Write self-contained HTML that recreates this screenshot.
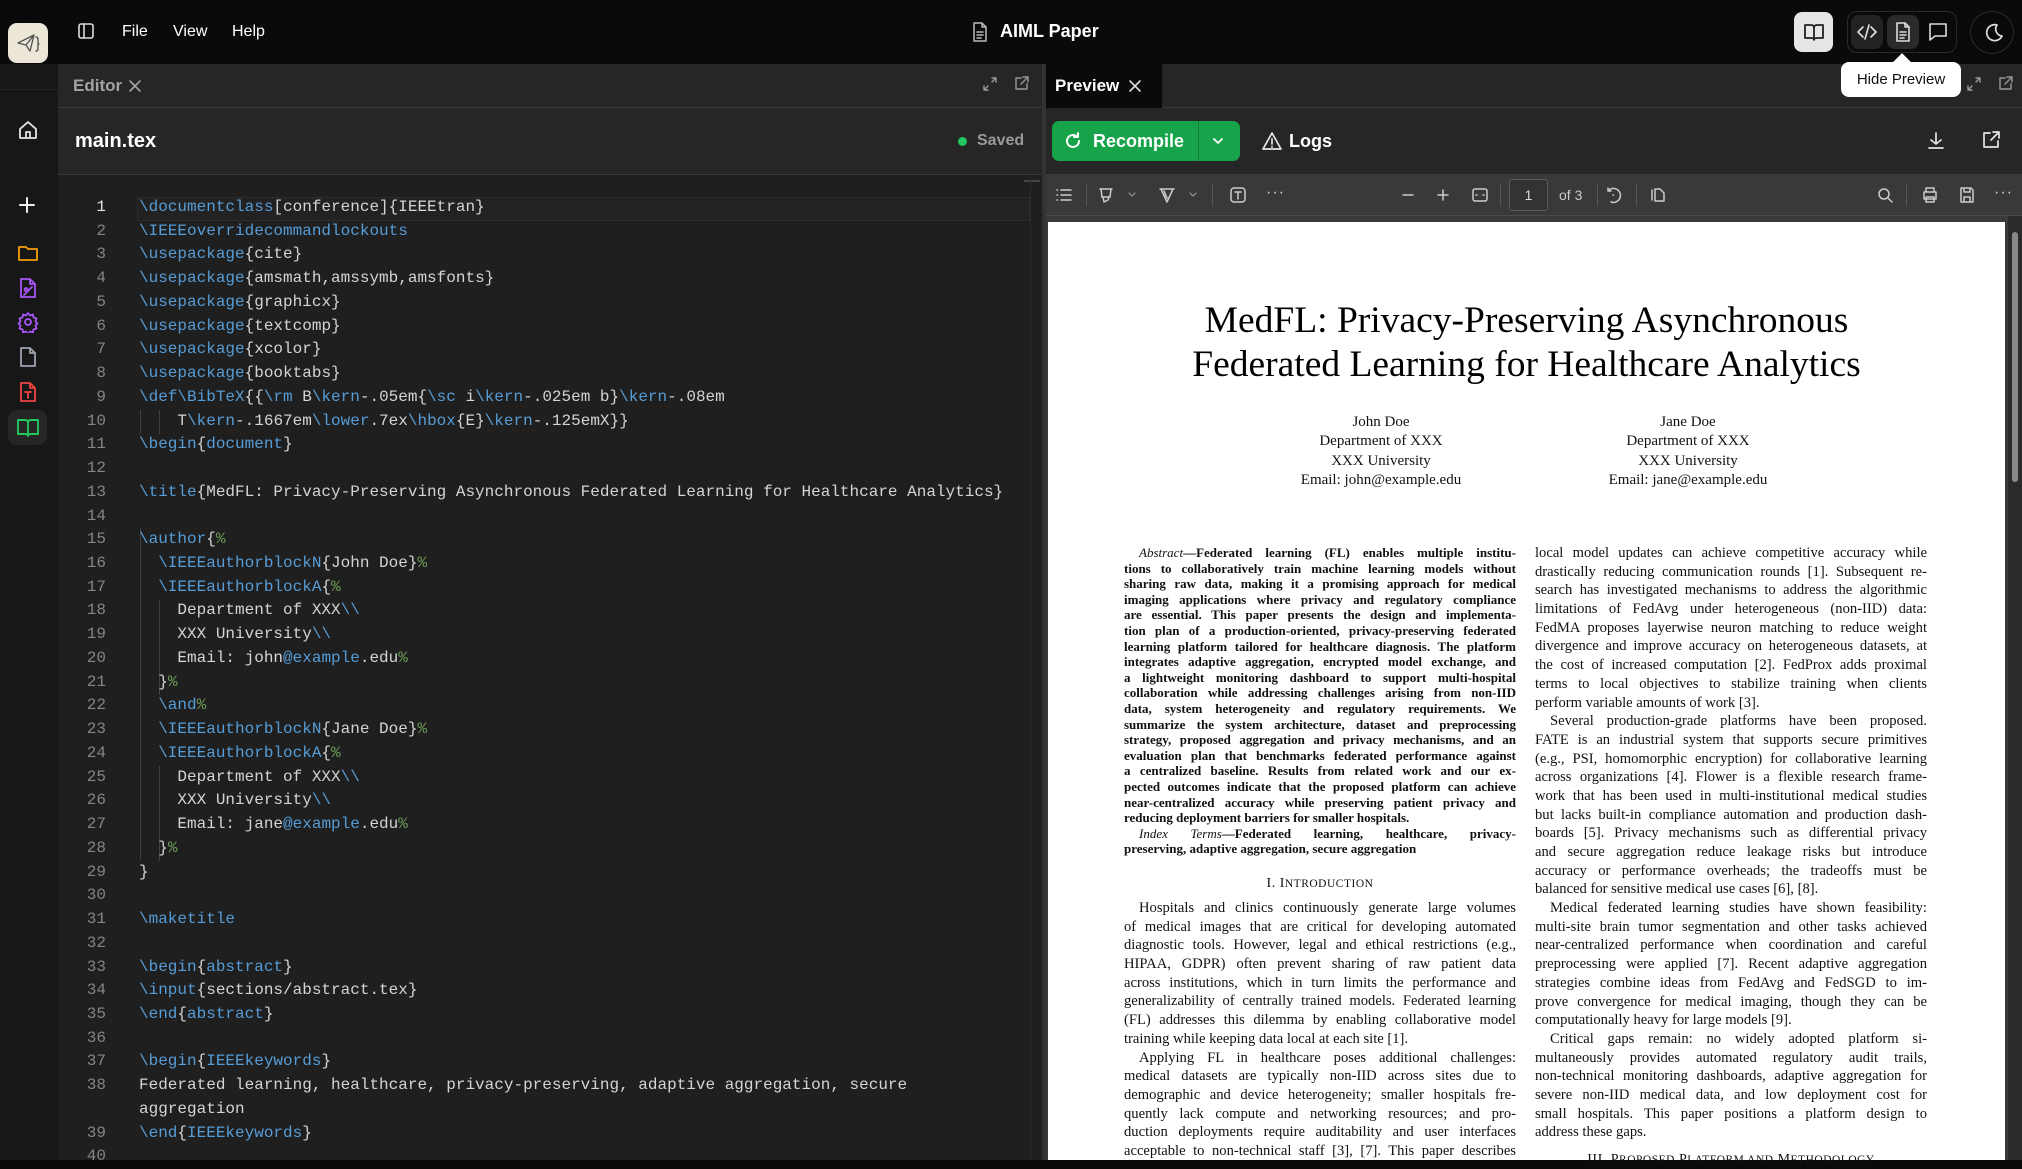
<!DOCTYPE html>
<html><head><meta charset="utf-8">
<style>
*{box-sizing:border-box;margin:0;padding:0}
body{width:2022px;height:1160px;overflow:hidden;background:#0a0a0a;font-family:"Liberation Sans",sans-serif;position:relative}
.a{position:absolute}
svg{position:absolute;fill:none;stroke-linecap:round;stroke-linejoin:round}
.code{position:absolute;left:139px;top:196px;font-family:"Liberation Mono",monospace;font-size:16px;line-height:23.74px;color:#d4d4d4;white-space:pre}
.nums{position:absolute;left:58px;width:48px;top:196px;font-family:"Liberation Mono",monospace;font-size:16px;line-height:23.74px;color:#858585;text-align:right;white-space:pre}
.k{color:#569cd6}.c{color:#6a9955}
.pdf{font-family:"Liberation Serif",serif;color:#111}
.col{position:absolute;width:392px}
.col div{height:18.7px;line-height:18.7px;font-size:14.6px;text-align:justify;text-align-last:justify;overflow:hidden;white-space:nowrap}
.col div.e{text-align-last:left}
.col div.i{padding-left:15px}
.ab div{height:15.6px;line-height:15.6px;font-size:13px;font-weight:bold}
.tb{position:absolute;top:195px;color:#cfcfcf}
</style></head><body>

<!-- top bar -->
<div class="a" style="left:0;top:0;width:2022px;height:64px;background:#0a0a0a"></div>
<div class="a" style="left:8px;top:23px;width:40px;height:40px;background:#ece7d8;border-radius:9px"></div>
<svg style="left:14px;top:29px" width="28" height="28" viewBox="0 0 28 28" stroke="#555" stroke-width="1.4"><path d="M4 14 L20 6 L16 22 L12 16 Z M12 16 L20 6"/><path d="M22 8 q2 0 2 3 v3 q0 1 1 1 q-1 0 -1 1 v3 q0 3 -2 3"/></svg>
<svg style="left:77px;top:22px" width="18" height="18" viewBox="0 0 18 18" stroke="#ddd" stroke-width="1.6"><rect x="2" y="2" width="14" height="14" rx="2"/><path d="M7 2v14"/></svg>
<div class="a" style="left:122px;top:23px;color:#fff;font-size:16px">File</div>
<div class="a" style="left:173px;top:23px;color:#fff;font-size:16px">View</div>
<div class="a" style="left:232px;top:23px;color:#fff;font-size:16px">Help</div>
<svg style="left:971px;top:21px" width="18" height="22" viewBox="0 0 18 22" stroke="#bbb" stroke-width="1.5"><path d="M3 2h8l4 4v14H3z M11 2v4h4 M6 11h6 M6 14h6 M6 17h4"/></svg>
<div class="a" style="left:1000px;top:21px;color:#fff;font-size:18px;font-weight:bold">AIML Paper</div>
<div class="a" style="left:1794px;top:12px;width:39px;height:40px;background:#e6e6e6;border-radius:8px"></div>
<svg style="left:1803px;top:22px" width="22" height="20" viewBox="0 0 22 20" stroke="#222" stroke-width="1.8"><path d="M2 3h6q3 0 3 3v12q0-2-3-2H2z M20 3h-6q-3 0-3 3v12q0-2 3-2h6z"/></svg>
<div class="a" style="left:1847px;top:11px;width:110px;height:42px;border:1px solid #2a2a2a;border-radius:10px"></div>
<div class="a" style="left:1851px;top:15px;width:32px;height:34px;background:#222;border-radius:8px"></div>
<div class="a" style="left:1887px;top:15px;width:32px;height:34px;background:#2a2a2a;border-radius:8px"></div>
<svg style="left:1855px;top:22px" width="24" height="20" viewBox="0 0 24 20" stroke="#ddd" stroke-width="1.6"><path d="M8 5l-5 5 5 5 M16 5l5 5-5 5 M14 3l-4 14"/></svg>
<svg style="left:1894px;top:21px" width="18" height="22" viewBox="0 0 18 22" stroke="#ddd" stroke-width="1.6"><path d="M3 2h8l4 4v14H3z M11 2v4h4 M6 11h6 M6 14h6 M6 17h4"/></svg>
<svg style="left:1927px;top:21px" width="22" height="22" viewBox="0 0 22 22" stroke="#ddd" stroke-width="1.6"><path d="M3 3h16v12H8l-5 4z"/></svg>
<div class="a" style="left:1970px;top:11px;width:44px;height:43px;border:1px solid #2a2a2a;border-radius:50%"></div>
<svg style="left:1982px;top:22px" width="22" height="22" viewBox="0 0 22 22" stroke="#ddd" stroke-width="1.7"><path d="M15 3a8 8 0 1 0 5 11 a7 7 0 0 1 -5 -11z"/></svg>

<!-- sidebar -->
<div class="a" style="left:0;top:64px;width:58px;height:1096px;background:#171717"></div>
<div class="a" style="left:0;top:89px;width:58px;height:1px;background:#262626"></div>
<svg style="left:17px;top:119px" width="22" height="22" viewBox="0 0 22 22" stroke="#e5e5e5" stroke-width="1.8"><path d="M3 10l8-7 8 7v9H3z M9 19v-6h4v6"/></svg>
<svg style="left:17px;top:195px" width="20" height="20" viewBox="0 0 20 20" stroke="#eee" stroke-width="2"><path d="M10 3v14M3 10h14"/></svg>
<svg style="left:17px;top:243px" width="22" height="20" viewBox="0 0 22 20" stroke="#f59e0b" stroke-width="1.8"><path d="M2 4h7l2 2h9v11H2z"/></svg>
<svg style="left:18px;top:277px" width="20" height="22" viewBox="0 0 20 22" stroke="#a855f7" stroke-width="1.8"><path d="M3 2h9l5 5v13H3z M12 2v5h5 M6 18l8-8 M8 11a1.5 1.5 0 1 0 0.1 0"/></svg>
<svg style="left:17px;top:311px" width="22" height="22" viewBox="0 0 22 22" stroke="#a855f7" stroke-width="1.8"><circle cx="11" cy="11" r="3"/><path d="M11 2l2 2.5 3-1 .5 3 3 1-1 3 2 2-2 2 1 3-3 1-.5 3-3-1-2 2.5-2-2.5-3 1-.5-3-3-1 1-3-2-2 2-2-1-3 3-1 .5-3 3 1z"/></svg>
<svg style="left:18px;top:346px" width="20" height="22" viewBox="0 0 20 22" stroke="#9ca3af" stroke-width="1.8"><path d="M3 2h9l5 5v13H3z M12 2v5h5"/></svg>
<svg style="left:18px;top:381px" width="20" height="22" viewBox="0 0 20 22" stroke="#ef4444" stroke-width="1.8"><path d="M3 2h9l5 5v13H3z M12 2v5h5 M7 11h6 M10 11v6"/></svg>
<div class="a" style="left:8px;top:410px;width:39px;height:35px;background:#262626;border-radius:9px"></div>
<svg style="left:16px;top:417px" width="24" height="22" viewBox="0 0 24 22" stroke="#22c55e" stroke-width="1.9"><path d="M2 3h7q3 0 3 3v13q0-2-3-2H2z M22 3h-7q-3 0-3 3v13q0-2 3-2h7z"/></svg>

<!-- editor -->
<div class="a" style="left:58px;top:64px;width:984px;height:44px;background:#262626;border-bottom:1px solid #3a3a3a"></div>
<div class="a" style="left:73px;top:76px;color:#a3a3a3;font-size:17px;font-weight:bold">Editor</div>
<svg style="left:127px;top:78px" width="16" height="16" viewBox="0 0 16 16" stroke="#a3a3a3" stroke-width="1.6"><path d="M3 3l10 10M13 3L3 13"/></svg>
<svg style="left:982px;top:76px" width="16" height="16" viewBox="0 0 16 16" stroke="#999" stroke-width="1.4"><path d="M10 2h4v4M14 2l-4 4M6 14H2v-4M2 14l4-4"/></svg>
<svg style="left:1013px;top:75px" width="17" height="17" viewBox="0 0 17 17" stroke="#999" stroke-width="1.4"><path d="M8 3H3v11h11V9 M10 2h5v5 M15 2L8 9"/></svg>
<div class="a" style="left:58px;top:108px;width:984px;height:67px;background:#262626;border-bottom:1px solid #3a3a3a"></div>
<div class="a" style="left:75px;top:130px;color:#fff;font-size:20px;font-weight:bold">main.tex</div>
<div class="a" style="left:958px;top:137px;width:9px;height:9px;border-radius:50%;background:#22c55e"></div>
<div class="a" style="left:977px;top:132px;color:#9a9a9a;font-size:16px;font-weight:bold">Saved</div>
<div class="a" style="left:58px;top:175px;width:984px;height:985px;background:#1f1f1f"></div>
<div class="a" style="left:137px;top:197px;width:893px;height:24px;border:1px solid #2c2c2c;background:#222"></div>
<div class="a" style="left:1024px;top:180px;width:16px;height:2px;background:#444"></div>
<div class="a" style="left:1030px;top:175px;width:1px;height:985px;background:#2a2a2a"></div>
<!-- indent guides -->
<div class="a" style="left:140px;top:410px;width:1px;height:24px;background:#404040"></div>
<div class="a" style="left:159px;top:410px;width:1px;height:24px;background:#404040"></div>
<div class="a" style="left:140px;top:528px;width:1px;height:332px;background:#404040"></div>
<div class="a" style="left:159px;top:600px;width:1px;height:95px;background:#404040"></div>
<div class="a" style="left:159px;top:766px;width:1px;height:95px;background:#404040"></div>
<div class="nums"><span style="color:#e5e5e5">1</span>
2
3
4
5
6
7
8
9
10
11
12
13
14
15
16
17
18
19
20
21
22
23
24
25
26
27
28
29
30
31
32
33
34
35
36
37
38

39
40</div>
<div class="code"><span class="k">\documentclass</span>[conference]{IEEEtran}
<span class="k">\IEEEoverridecommandlockouts</span>
<span class="k">\usepackage</span>{cite}
<span class="k">\usepackage</span>{amsmath,amssymb,amsfonts}
<span class="k">\usepackage</span>{graphicx}
<span class="k">\usepackage</span>{textcomp}
<span class="k">\usepackage</span>{xcolor}
<span class="k">\usepackage</span>{booktabs}
<span class="k">\def\BibTeX</span>{{<span class="k">\rm</span> B<span class="k">\kern</span>-.05em{<span class="k">\sc</span> i<span class="k">\kern</span>-.025em b}<span class="k">\kern</span>-.08em
    T<span class="k">\kern</span>-.1667em<span class="k">\lower</span>.7ex<span class="k">\hbox</span>{E}<span class="k">\kern</span>-.125emX}}
<span class="k">\begin</span>{<span class="k">document</span>}

<span class="k">\title</span>{MedFL: Privacy-Preserving Asynchronous Federated Learning for Healthcare Analytics}

<span class="k">\author</span>{<span class="c">%</span>
  <span class="k">\IEEEauthorblockN</span>{John Doe}<span class="c">%</span>
  <span class="k">\IEEEauthorblockA</span>{<span class="c">%</span>
    Department of XXX<span class="k">\\</span>
    XXX University<span class="k">\\</span>
    Email: john<span class="k">@example</span>.edu<span class="c">%</span>
  }<span class="c">%</span>
  <span class="k">\and</span><span class="c">%</span>
  <span class="k">\IEEEauthorblockN</span>{Jane Doe}<span class="c">%</span>
  <span class="k">\IEEEauthorblockA</span>{<span class="c">%</span>
    Department of XXX<span class="k">\\</span>
    XXX University<span class="k">\\</span>
    Email: jane<span class="k">@example</span>.edu<span class="c">%</span>
  }<span class="c">%</span>
}

<span class="k">\maketitle</span>

<span class="k">\begin</span>{<span class="k">abstract</span>}
<span class="k">\input</span>{sections/abstract.tex}
<span class="k">\end</span>{<span class="k">abstract</span>}

<span class="k">\begin</span>{<span class="k">IEEEkeywords</span>}
Federated learning, healthcare, privacy-preserving, adaptive aggregation, secure
aggregation
<span class="k">\end</span>{<span class="k">IEEEkeywords</span>}
</div>
<div class="a" style="left:1042px;top:64px;width:4px;height:1096px;background:#333"></div>

<!-- preview -->
<div class="a" style="left:1046px;top:64px;width:976px;height:44px;background:#262626;border-bottom:1px solid #3a3a3a"></div>
<div class="a" style="left:1046px;top:64px;width:116px;height:44px;background:#0a0a0a"></div>
<div class="a" style="left:1055px;top:76px;color:#fff;font-size:17px;font-weight:bold">Preview</div>
<svg style="left:1127px;top:78px" width="16" height="16" viewBox="0 0 16 16" stroke="#ddd" stroke-width="1.6"><path d="M3 3l10 10M13 3L3 13"/></svg>
<svg style="left:1966px;top:76px" width="16" height="16" viewBox="0 0 16 16" stroke="#999" stroke-width="1.4"><path d="M10 2h4v4M14 2l-4 4M6 14H2v-4M2 14l4-4"/></svg>
<svg style="left:1997px;top:75px" width="17" height="17" viewBox="0 0 17 17" stroke="#999" stroke-width="1.4"><path d="M8 3H3v11h11V9 M10 2h5v5 M15 2L8 9"/></svg>
<div class="a" style="left:1046px;top:108px;width:976px;height:67px;background:#262626;border-bottom:1px solid #3a3a3a"></div>
<div class="a" style="left:1052px;top:121px;width:188px;height:40px;background:#16a34a;border-radius:7px"></div>
<div class="a" style="left:1198px;top:121px;width:1px;height:40px;background:#12803b"></div>
<svg style="left:1063px;top:131px" width="20" height="20" viewBox="0 0 20 20" stroke="#fff" stroke-width="2"><path d="M16 10a6 6 0 1 1-2-4.5 M15 2v4h-4"/></svg>
<div class="a" style="left:1093px;top:131px;color:#fff;font-size:18px;font-weight:bold">Recompile</div>
<svg style="left:1211px;top:134px" width="14" height="14" viewBox="0 0 14 14" stroke="#fff" stroke-width="1.8"><path d="M3 5l4 4 4-4"/></svg>
<svg style="left:1262px;top:131px" width="20" height="20" viewBox="0 0 20 20" stroke="#e5e5e5" stroke-width="1.7"><path d="M10 2L1 18h18z M10 8v5 M10 15.5v.5"/></svg>
<div class="a" style="left:1289px;top:131px;color:#fff;font-size:18px;font-weight:bold">Logs</div>
<svg style="left:1926px;top:131px" width="20" height="20" viewBox="0 0 20 20" stroke="#e5e5e5" stroke-width="1.7"><path d="M10 2v11 M5 9l5 4 5-4 M3 17h14"/></svg>
<svg style="left:1981px;top:130px" width="20" height="20" viewBox="0 0 20 20" stroke="#e5e5e5" stroke-width="1.7"><path d="M9 3H3v14h14v-6 M12 2h6v6 M18 2l-8 8"/></svg>

<!-- pdf toolbar -->
<div class="a" style="left:1046px;top:175px;width:976px;height:41px;background:#393939;border-bottom:1px solid #4a4a4a"></div>
<svg style="left:1055px;top:187px" width="18" height="16" viewBox="0 0 18 16" stroke="#ccc" stroke-width="1.5"><path d="M6 3h10M6 8h10M6 13h10M2 3h.5M2 8h.5M2 13h.5"/></svg>
<div class="a" style="left:1086px;top:184px;width:1px;height:22px;background:#555"></div>
<svg style="left:1097px;top:186px" width="18" height="18" viewBox="0 0 18 18" stroke="#ccc" stroke-width="1.5"><path d="M3 3h12 M4 3l1 8h8l1-8 M6 11l1 5 4-2 1-3"/></svg>
<svg style="left:1127px;top:191px" width="10" height="8" viewBox="0 0 10 8" stroke="#999" stroke-width="1.2"><path d="M2 2l3 3 3-3"/></svg>
<svg style="left:1158px;top:186px" width="18" height="18" viewBox="0 0 18 18" stroke="#ccc" stroke-width="1.5"><path d="M2 3h14 M3 3l6 13 6-13 M6 5l3 7"/></svg>
<svg style="left:1188px;top:191px" width="10" height="8" viewBox="0 0 10 8" stroke="#999" stroke-width="1.2"><path d="M2 2l3 3 3-3"/></svg>
<div class="a" style="left:1212px;top:184px;width:1px;height:22px;background:#555"></div>
<svg style="left:1229px;top:186px" width="18" height="18" viewBox="0 0 18 18" stroke="#ccc" stroke-width="1.5"><rect x="2" y="2" width="14" height="14" rx="3"/><path d="M6 6h6M9 6v7"/></svg>
<div class="tb" style="left:1266px;top:184px;font-size:16px;letter-spacing:1px">···</div>
<svg style="left:1400px;top:188px" width="16" height="14" viewBox="0 0 16 14" stroke="#ccc" stroke-width="1.5"><path d="M3 7h10"/></svg>
<svg style="left:1435px;top:187px" width="16" height="16" viewBox="0 0 16 16" stroke="#ccc" stroke-width="1.5"><path d="M3 8h10M8 3v10"/></svg>
<svg style="left:1471px;top:186px" width="18" height="18" viewBox="0 0 18 18" stroke="#ccc" stroke-width="1.5"><rect x="2" y="3" width="14" height="12" rx="2"/><path d="M5 9h1M12 9h1"/></svg>
<div class="a" style="left:1500px;top:184px;width:1px;height:22px;background:#555"></div>
<div class="a" style="left:1509px;top:179px;width:39px;height:32px;border:1px solid #5a5a5a;background:#333;border-radius:3px;color:#ddd;font-size:14px;text-align:center;line-height:30px">1</div>
<div class="a" style="left:1559px;top:187px;color:#ccc;font-size:14px">of 3</div>
<div class="a" style="left:1597px;top:184px;width:1px;height:22px;background:#555"></div>
<svg style="left:1604px;top:186px" width="18" height="18" viewBox="0 0 18 18" stroke="#ccc" stroke-width="1.5"><path d="M4 5a7 7 0 1 1 3 11 M4 2v3h3 M9 9h.5"/></svg>
<div class="a" style="left:1636px;top:184px;width:1px;height:22px;background:#555"></div>
<svg style="left:1649px;top:186px" width="18" height="18" viewBox="0 0 18 18" stroke="#ccc" stroke-width="1.5"><path d="M3 4v10 M6 3h5l4 4v8H6z"/></svg>
<svg style="left:1876px;top:186px" width="18" height="18" viewBox="0 0 18 18" stroke="#ccc" stroke-width="1.5"><circle cx="8" cy="8" r="5"/><path d="M12 12l4 4"/></svg>
<div class="a" style="left:1906px;top:184px;width:1px;height:22px;background:#555"></div>
<svg style="left:1921px;top:186px" width="18" height="18" viewBox="0 0 18 18" stroke="#ccc" stroke-width="1.5"><path d="M5 6V2h8v4 M3 6h12v7H3z M5 11h8v5H5z"/></svg>
<svg style="left:1958px;top:186px" width="18" height="18" viewBox="0 0 18 18" stroke="#ccc" stroke-width="1.5"><path d="M3 2h10l2 2v12H3z M6 2v4h6V2 M6 11h6v5H6z"/></svg>
<div class="tb" style="left:1994px;top:184px;font-size:16px;letter-spacing:1px">···</div>

<!-- pdf area -->
<div class="a" style="left:1046px;top:216px;width:976px;height:944px;background:#3a3a3a"></div>
<div class="a" style="left:2008px;top:216px;width:14px;height:944px;background:#2a2a2a"></div>
<div class="a" style="left:2012px;top:232px;width:6px;height:250px;background:#888;border-radius:3px"></div>
<div class="a pdf" style="left:1048px;top:222px;width:957px;height:938px;background:#fff">
  <div class="a" style="left:0;top:77px;width:957px;text-align:center;font-size:37.5px;line-height:44px;color:#000">MedFL: Privacy-Preserving Asynchronous<br>Federated Learning for Healthcare Analytics</div>
  <div class="a" style="left:233px;top:191px;width:200px;text-align:center;font-size:15px;line-height:19.4px">John Doe<br>Department of XXX<br>XXX University<br>Email: john@example.edu</div>
  <div class="a" style="left:540px;top:191px;width:200px;text-align:center;font-size:15px;line-height:19.4px">Jane Doe<br>Department of XXX<br>XXX University<br>Email: jane@example.edu</div>
</div>

<div class="col ab pdf" style="left:1124px;top:545px">
<div class="i"><i style="font-weight:normal">Abstract</i>—Federated learning (FL) enables multiple institu-</div>
<div>tions to collaboratively train machine learning models without</div>
<div>sharing raw data, making it a promising approach for medical</div>
<div>imaging applications where privacy and regulatory compliance</div>
<div>are essential. This paper presents the design and implementa-</div>
<div>tion plan of a production-oriented, privacy-preserving federated</div>
<div>learning platform tailored for healthcare diagnosis. The platform</div>
<div>integrates adaptive aggregation, encrypted model exchange, and</div>
<div>a lightweight monitoring dashboard to support multi-hospital</div>
<div>collaboration while addressing challenges arising from non-IID</div>
<div>data, system heterogeneity and regulatory requirements. We</div>
<div>summarize the system architecture, dataset and preprocessing</div>
<div>strategy, proposed aggregation and privacy mechanisms, and an</div>
<div>evaluation plan that benchmarks federated performance against</div>
<div>a centralized baseline. Results from related work and our ex-</div>
<div>pected outcomes indicate that the proposed platform can achieve</div>
<div>near-centralized accuracy while preserving patient privacy and</div>
<div class="e">reducing deployment barriers for smaller hospitals.</div>
<div class="i"><i style="font-weight:normal">Index Terms</i>—Federated learning, healthcare, privacy-</div>
<div class="e">preserving, adaptive aggregation, secure aggregation</div>
</div>
<div class="a pdf" style="left:1124px;top:876px;width:392px;text-align:center;font-size:14px;letter-spacing:0.5px">I. I<span style="font-size:11.5px">NTRODUCTION</span></div>
<div class="col pdf" style="left:1124px;top:899px">
<div class="i">Hospitals and clinics continuously generate large volumes</div>
<div>of medical images that are critical for developing automated</div>
<div>diagnostic tools. However, legal and ethical restrictions (e.g.,</div>
<div>HIPAA, GDPR) often prevent sharing of raw patient data</div>
<div>across institutions, which in turn limits the performance and</div>
<div>generalizability of centrally trained models. Federated learning</div>
<div>(FL) addresses this dilemma by enabling collaborative model</div>
<div class="e">training while keeping data local at each site [1].</div>
<div class="i">Applying FL in healthcare poses additional challenges:</div>
<div>medical datasets are typically non-IID across sites due to</div>
<div>demographic and device heterogeneity; smaller hospitals fre-</div>
<div>quently lack compute and networking resources; and pro-</div>
<div>duction deployments require auditability and user interfaces</div>
<div>acceptable to non-technical staff [3], [7]. This paper describes</div>
</div>
<div class="col pdf" style="left:1535px;top:544px">
<div>local model updates can achieve competitive accuracy while</div>
<div>drastically reducing communication rounds [1]. Subsequent re-</div>
<div>search has investigated mechanisms to address the algorithmic</div>
<div>limitations of FedAvg under heterogeneous (non-IID) data:</div>
<div>FedMA proposes layerwise neuron matching to reduce weight</div>
<div>divergence and improve accuracy on heterogeneous datasets, at</div>
<div>the cost of increased computation [2]. FedProx adds proximal</div>
<div>terms to local objectives to stabilize training when clients</div>
<div class="e">perform variable amounts of work [3].</div>
<div class="i">Several production-grade platforms have been proposed.</div>
<div>FATE is an industrial system that supports secure primitives</div>
<div>(e.g., PSI, homomorphic encryption) for collaborative learning</div>
<div>across organizations [4]. Flower is a flexible research frame-</div>
<div>work that has been used in multi-institutional medical studies</div>
<div>but lacks built-in compliance automation and production dash-</div>
<div>boards [5]. Privacy mechanisms such as differential privacy</div>
<div>and secure aggregation reduce leakage risks but introduce</div>
<div>accuracy or performance overheads; the tradeoffs must be</div>
<div class="e">balanced for sensitive medical use cases [6], [8].</div>
<div class="i">Medical federated learning studies have shown feasibility:</div>
<div>multi-site brain tumor segmentation and other tasks achieved</div>
<div>near-centralized performance when coordination and careful</div>
<div>preprocessing were applied [7]. Recent adaptive aggregation</div>
<div>strategies combine ideas from FedAvg and FedSGD to im-</div>
<div>prove convergence for medical imaging, though they can be</div>
<div class="e">computationally heavy for large models [9].</div>
<div class="i">Critical gaps remain: no widely adopted platform si-</div>
<div>multaneously provides automated regulatory audit trails,</div>
<div>non-technical monitoring dashboards, adaptive aggregation for</div>
<div>severe non-IID medical data, and low deployment cost for</div>
<div>small hospitals. This paper positions a platform design to</div>
<div class="e">address these gaps.</div>
</div>
<div class="a pdf" style="left:1535px;top:1152px;width:392px;text-align:center;font-size:14px;letter-spacing:0.5px">III. P<span style="font-size:11.5px">ROPOSED</span> P<span style="font-size:11.5px">LATFORM AND</span> M<span style="font-size:11.5px">ETHODOLOGY</span></div>

<!-- tooltip -->
<div class="a" style="left:1895px;top:56px;width:14px;height:14px;background:#fff;transform:rotate(45deg)"></div>
<div class="a" style="left:1841px;top:62px;width:120px;height:35px;background:#fff;border-radius:8px;color:#111;font-size:15px;text-align:center;line-height:35px">Hide Preview</div>
</body></html>
